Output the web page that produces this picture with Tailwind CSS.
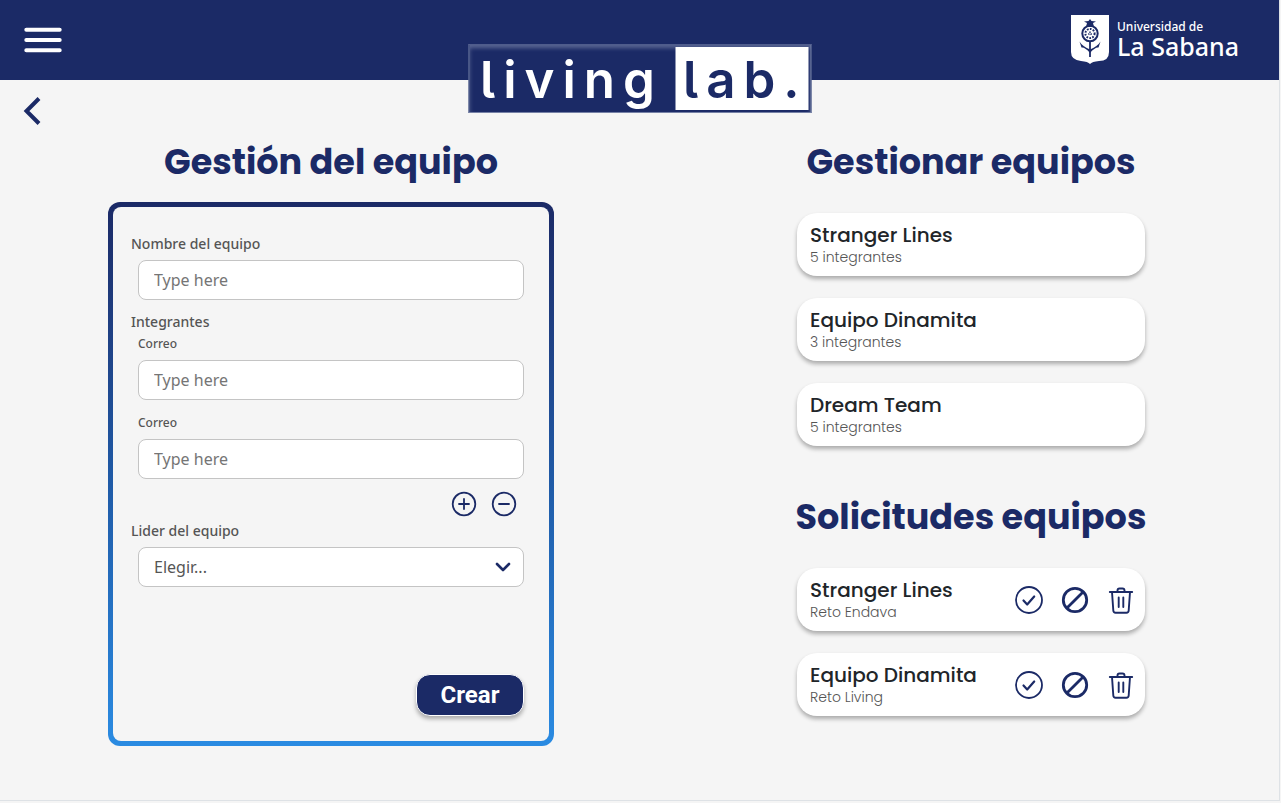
<!DOCTYPE html>
<html lang="es">
<head>
<meta charset="utf-8">
<meta name="viewport" content="width=device-width, initial-scale=1">
<title>Living Lab - Gestión del equipo</title>
<script src="https://cdn.jsdelivr.net/npm/@tailwindcss/browser@4"></script>
</head>
<body class="min-h-screen bg-[#f5f5f5] pr-px font-['Poppins','Inter',sans-serif] text-[#1b2a66]">
<svg class="hidden" aria-hidden="true">
  <symbol id="check" viewBox="0 0 28 28"><circle cx="14" cy="14" r="13" fill="none" stroke="currentColor" stroke-width="1.8"/><path d="M8.500 14.500l3.700 4 7-8" fill="none" stroke="currentColor" stroke-width="2.200" stroke-linecap="round" stroke-linejoin="round"/></symbol>
  <symbol id="ban" viewBox="0 0 28 28"><circle cx="14" cy="14" r="11.700" fill="none" stroke="currentColor" stroke-width="2.800"/><path d="M5.700 22.300L22.300 5.700" stroke="currentColor" stroke-width="2.800"/></symbol>
  <symbol id="trash" viewBox="0 0 28 28"><path d="M2.800 6H25.200M10.500 5.700V4.500a2 2 0 0 1 2-2h3a2 2 0 0 1 2 2V5.700M5 6l1.300 18.500a2.300 2.300 0 0 0 2.300 2.200h10.800a2.300 2.300 0 0 0 2.300-2.200L23 6M11.700 11.500v9.500M16.300 11.500v9.500" fill="none" stroke="currentColor" stroke-width="1.900" stroke-linecap="round" stroke-linejoin="round"/></symbol>
</svg>
<div class="min-h-[801px] border-r border-b border-[#dee2e6]">
  <header class="relative flex h-20 items-center justify-between bg-[#1b2a66] pr-10 pl-6 text-white">
    <button type="button" aria-label="Menú"><svg class="h-[26px] w-[38px]" viewBox="0 0 38 26" fill="none" stroke="#fff" stroke-width="4" stroke-linecap="round"><path d="M2.300 2.700H35.700M2.300 13H35.700M2.300 23.300H35.700"/></svg></button>
    <div class="absolute top-11 left-1/2 flex h-[69px] w-[343px] -translate-x-1/2 items-stretch border border-[#7681a6] border-t-[#4f5c8c] bg-[#1b2a66] pr-[2px] pb-px font-['Inter',sans-serif] text-[51px] leading-[69px] font-semibold shadow-[inset_0_3px_4px_#5a6693]">
      <span class="w-[206px] shrink-0 pl-[11px] tracking-[8px] [font-feature-settings:'cv05']">living</span>
      <span class="mt-[2px] mb-px min-w-0 flex-1 bg-white pl-[8px] leading-[65px] tracking-[8px] text-[#1b2a66] [font-feature-settings:'cv05']">lab.</span>
    </div>
    <a href="#" class="flex items-center gap-2 font-['Noto_Sans',sans-serif]">
      <svg class="h-[50px] w-[38px]" viewBox="0 0 38 50" aria-hidden="true">
        <path d="M0 0H38V37Q38 46 28 46Q21 46.500 19 49Q17 46.500 10 46Q0 45 0 37Z" fill="#fff"/>
        <g fill="none" stroke="#1b2a66"><circle cx="19" cy="18.500" r="7.700" stroke-width="2"/><circle cx="19" cy="18.500" r="4.600" stroke-width="2" stroke-dasharray="1.700 1.300"/><circle cx="19" cy="18.500" r="1.300" stroke-width="1.400" stroke-dasharray="1.400 1"/><path d="M19 26V42" stroke-width="1.800"/></g>
        <path d="M15 12L16 8l-3-1.500 4.500-.5L19 4l1.500 2 4.500.5L22 8l1 4Z" fill="#1b2a66"/>
        <path d="M8.500 26.500Q11 31 19 34.500V38Q14 32 10.500 32.500ZM29.500 26.500Q27 31 19 34.500V38Q24 32 27.500 32.500Z" fill="#1b2a66"/>
      </svg>
      <span class="flex flex-col pb-[2px] font-medium"><span class="text-[12px] leading-[14px]">Universidad de</span><span class="text-[25px] leading-[24px]">La Sabana</span></span>
    </a>
  </header>
  <nav class="pt-4 pl-[23px]"><a href="#" aria-label="Volver" class="block w-[18px]"><svg class="h-[30px] w-[18px]" viewBox="0 0 18 30" fill="none" stroke="#1b2a66" stroke-width="4"><path d="M16 2.500L3.500 15 16 27.500"/></svg></a></nav>
  <main class="grid grid-cols-2 gap-[194px] pr-[85px] pl-[108px]">
    <section>
      <h1 class="mt-3 text-center text-[35px] leading-[48px] font-bold whitespace-nowrap">Gestión del equipo</h1>
      <div class="mt-4 rounded-xl bg-linear-to-b from-[#1b2a66] via-[#1f59a5] to-[#2a8be2] p-[5px]">
        <form class="flex flex-col rounded-lg bg-[#f5f5f5] px-[18px] pt-[27px] pb-[25px] font-['Noto_Sans',sans-serif] text-[14px] leading-5 font-medium text-[#555]">
          <label for="nombre">Nombre del equipo</label>
          <input id="nombre" type="text" placeholder="Type here" class="mx-[7px] mt-[6px] h-10 rounded-lg border border-[#c4c4c4] bg-white px-[15px] text-base font-normal placeholder:text-[#757575]">
          <fieldset class="mt-3 flex flex-col">
            <legend>Integrantes</legend>
            <div class="mx-[7px] mt-1 flex flex-col gap-2">
              <label for="correo1" class="text-[12px] leading-4">Correo</label>
              <input id="correo1" type="email" placeholder="Type here" class="h-10 rounded-lg border border-[#c4c4c4] bg-white px-[15px] text-base font-normal placeholder:text-[#757575]">
            </div>
            <div class="mx-[7px] mt-[15px] flex flex-col gap-2">
              <label for="correo2" class="text-[12px] leading-4">Correo</label>
              <input id="correo2" type="email" placeholder="Type here" class="h-10 rounded-lg border border-[#c4c4c4] bg-white px-[15px] text-base font-normal placeholder:text-[#757575]">
            </div>
            <div class="mt-3 mr-[14px] flex justify-end gap-[14px] text-[#1b2a66]">
              <button type="button" aria-label="Agregar integrante"><svg class="size-[26px]" viewBox="0 0 26 26" fill="none" stroke="currentColor" stroke-width="1.800" stroke-linecap="round"><circle cx="13" cy="13" r="11.300"/><path d="M8 13H18M13 8V18"/></svg></button>
              <button type="button" aria-label="Quitar integrante"><svg class="size-[26px]" viewBox="0 0 26 26" fill="none" stroke="currentColor" stroke-width="1.800" stroke-linecap="round"><circle cx="13" cy="13" r="11.300"/><path d="M8 13H18"/></svg></button>
            </div>
          </fieldset>
          <label for="lider" class="mt-1">Lider del equipo</label>
          <div class="mx-[7px] mt-[6px] grid items-center">
            <select id="lider" class="col-start-1 row-start-1 h-10 w-full appearance-none rounded-lg border border-[#c4c4c4] bg-white px-[15px] text-base font-normal text-[#555]"><option>Elegir...</option></select>
            <svg class="pointer-events-none col-start-1 row-start-1 mr-[13px] size-4 justify-self-end" viewBox="0 0 16 16" fill="none" stroke="#1b2a66" stroke-width="2.600" stroke-linecap="round" stroke-linejoin="round"><path d="M2 5l6 6 6-6"/></svg>
          </div>
          <button type="submit" class="mt-[87px] mr-[7px] h-[42px] w-[108px] self-end rounded-[14px] border border-white bg-[#1b2a66] font-['Roboto',sans-serif] text-[24px] leading-[40px] font-bold text-white shadow-[0_3px_4px_rgba(0,0,0,0.300)]">Crear</button>
        </form>
      </div>
    </section>
    <section class="flex flex-col items-center">
      <h2 class="mt-3 text-[35px] leading-[48px] font-bold whitespace-nowrap">Gestionar equipos</h2>
      <ul class="mt-[27px] flex w-[348px] flex-col gap-[22px]">
        <li class="h-[63px] rounded-[20px] bg-white px-[13px] pt-2 shadow-[0_3px_4px_rgba(0,0,0,0.300)]"><h3 class="text-[20px] leading-[28px] font-medium text-[#212529]">Stranger Lines</h3><p class="text-[14px] leading-[17px] font-light text-[#555]">5 integrantes</p></li>
        <li class="h-[63px] rounded-[20px] bg-white px-[13px] pt-2 shadow-[0_3px_4px_rgba(0,0,0,0.300)]"><h3 class="text-[20px] leading-[28px] font-medium text-[#212529]">Equipo Dinamita</h3><p class="text-[14px] leading-[17px] font-light text-[#555]">3 integrantes</p></li>
        <li class="h-[63px] rounded-[20px] bg-white px-[13px] pt-2 shadow-[0_3px_4px_rgba(0,0,0,0.300)]"><h3 class="text-[20px] leading-[28px] font-medium text-[#212529]">Dream Team</h3><p class="text-[14px] leading-[17px] font-light text-[#555]">5 integrantes</p></li>
      </ul>
      <h2 class="mt-[47px] text-[35px] leading-[48px] font-bold whitespace-nowrap">Solicitudes equipos</h2>
      <ul class="mt-[27px] flex w-[348px] flex-col gap-[22px]">
        <li class="flex h-[63px] items-center justify-between rounded-[20px] bg-white pr-[10px] pl-[13px] shadow-[0_3px_4px_rgba(0,0,0,0.300)]">
          <div class="pb-[2px]"><h3 class="text-[20px] leading-[28px] font-medium text-[#212529]">Stranger Lines</h3><p class="text-[14px] leading-[17px] font-light text-[#555]">Reto Endava</p></div>
          <div class="flex gap-[18px]"><button type="button" aria-label="Aceptar"><svg class="size-7"><use href="#check"/></svg></button><button type="button" aria-label="Rechazar"><svg class="size-7"><use href="#ban"/></svg></button><button type="button" aria-label="Eliminar"><svg class="size-7"><use href="#trash"/></svg></button></div>
        </li>
        <li class="flex h-[63px] items-center justify-between rounded-[20px] bg-white pr-[10px] pl-[13px] shadow-[0_3px_4px_rgba(0,0,0,0.300)]">
          <div class="pb-[2px]"><h3 class="text-[20px] leading-[28px] font-medium text-[#212529]">Equipo Dinamita</h3><p class="text-[14px] leading-[17px] font-light text-[#555]">Reto Living</p></div>
          <div class="flex gap-[18px]"><button type="button" aria-label="Aceptar"><svg class="size-7"><use href="#check"/></svg></button><button type="button" aria-label="Rechazar"><svg class="size-7"><use href="#ban"/></svg></button><button type="button" aria-label="Eliminar"><svg class="size-7"><use href="#trash"/></svg></button></div>
        </li>
      </ul>
    </section>
  </main>
</div>
</body>
</html>
